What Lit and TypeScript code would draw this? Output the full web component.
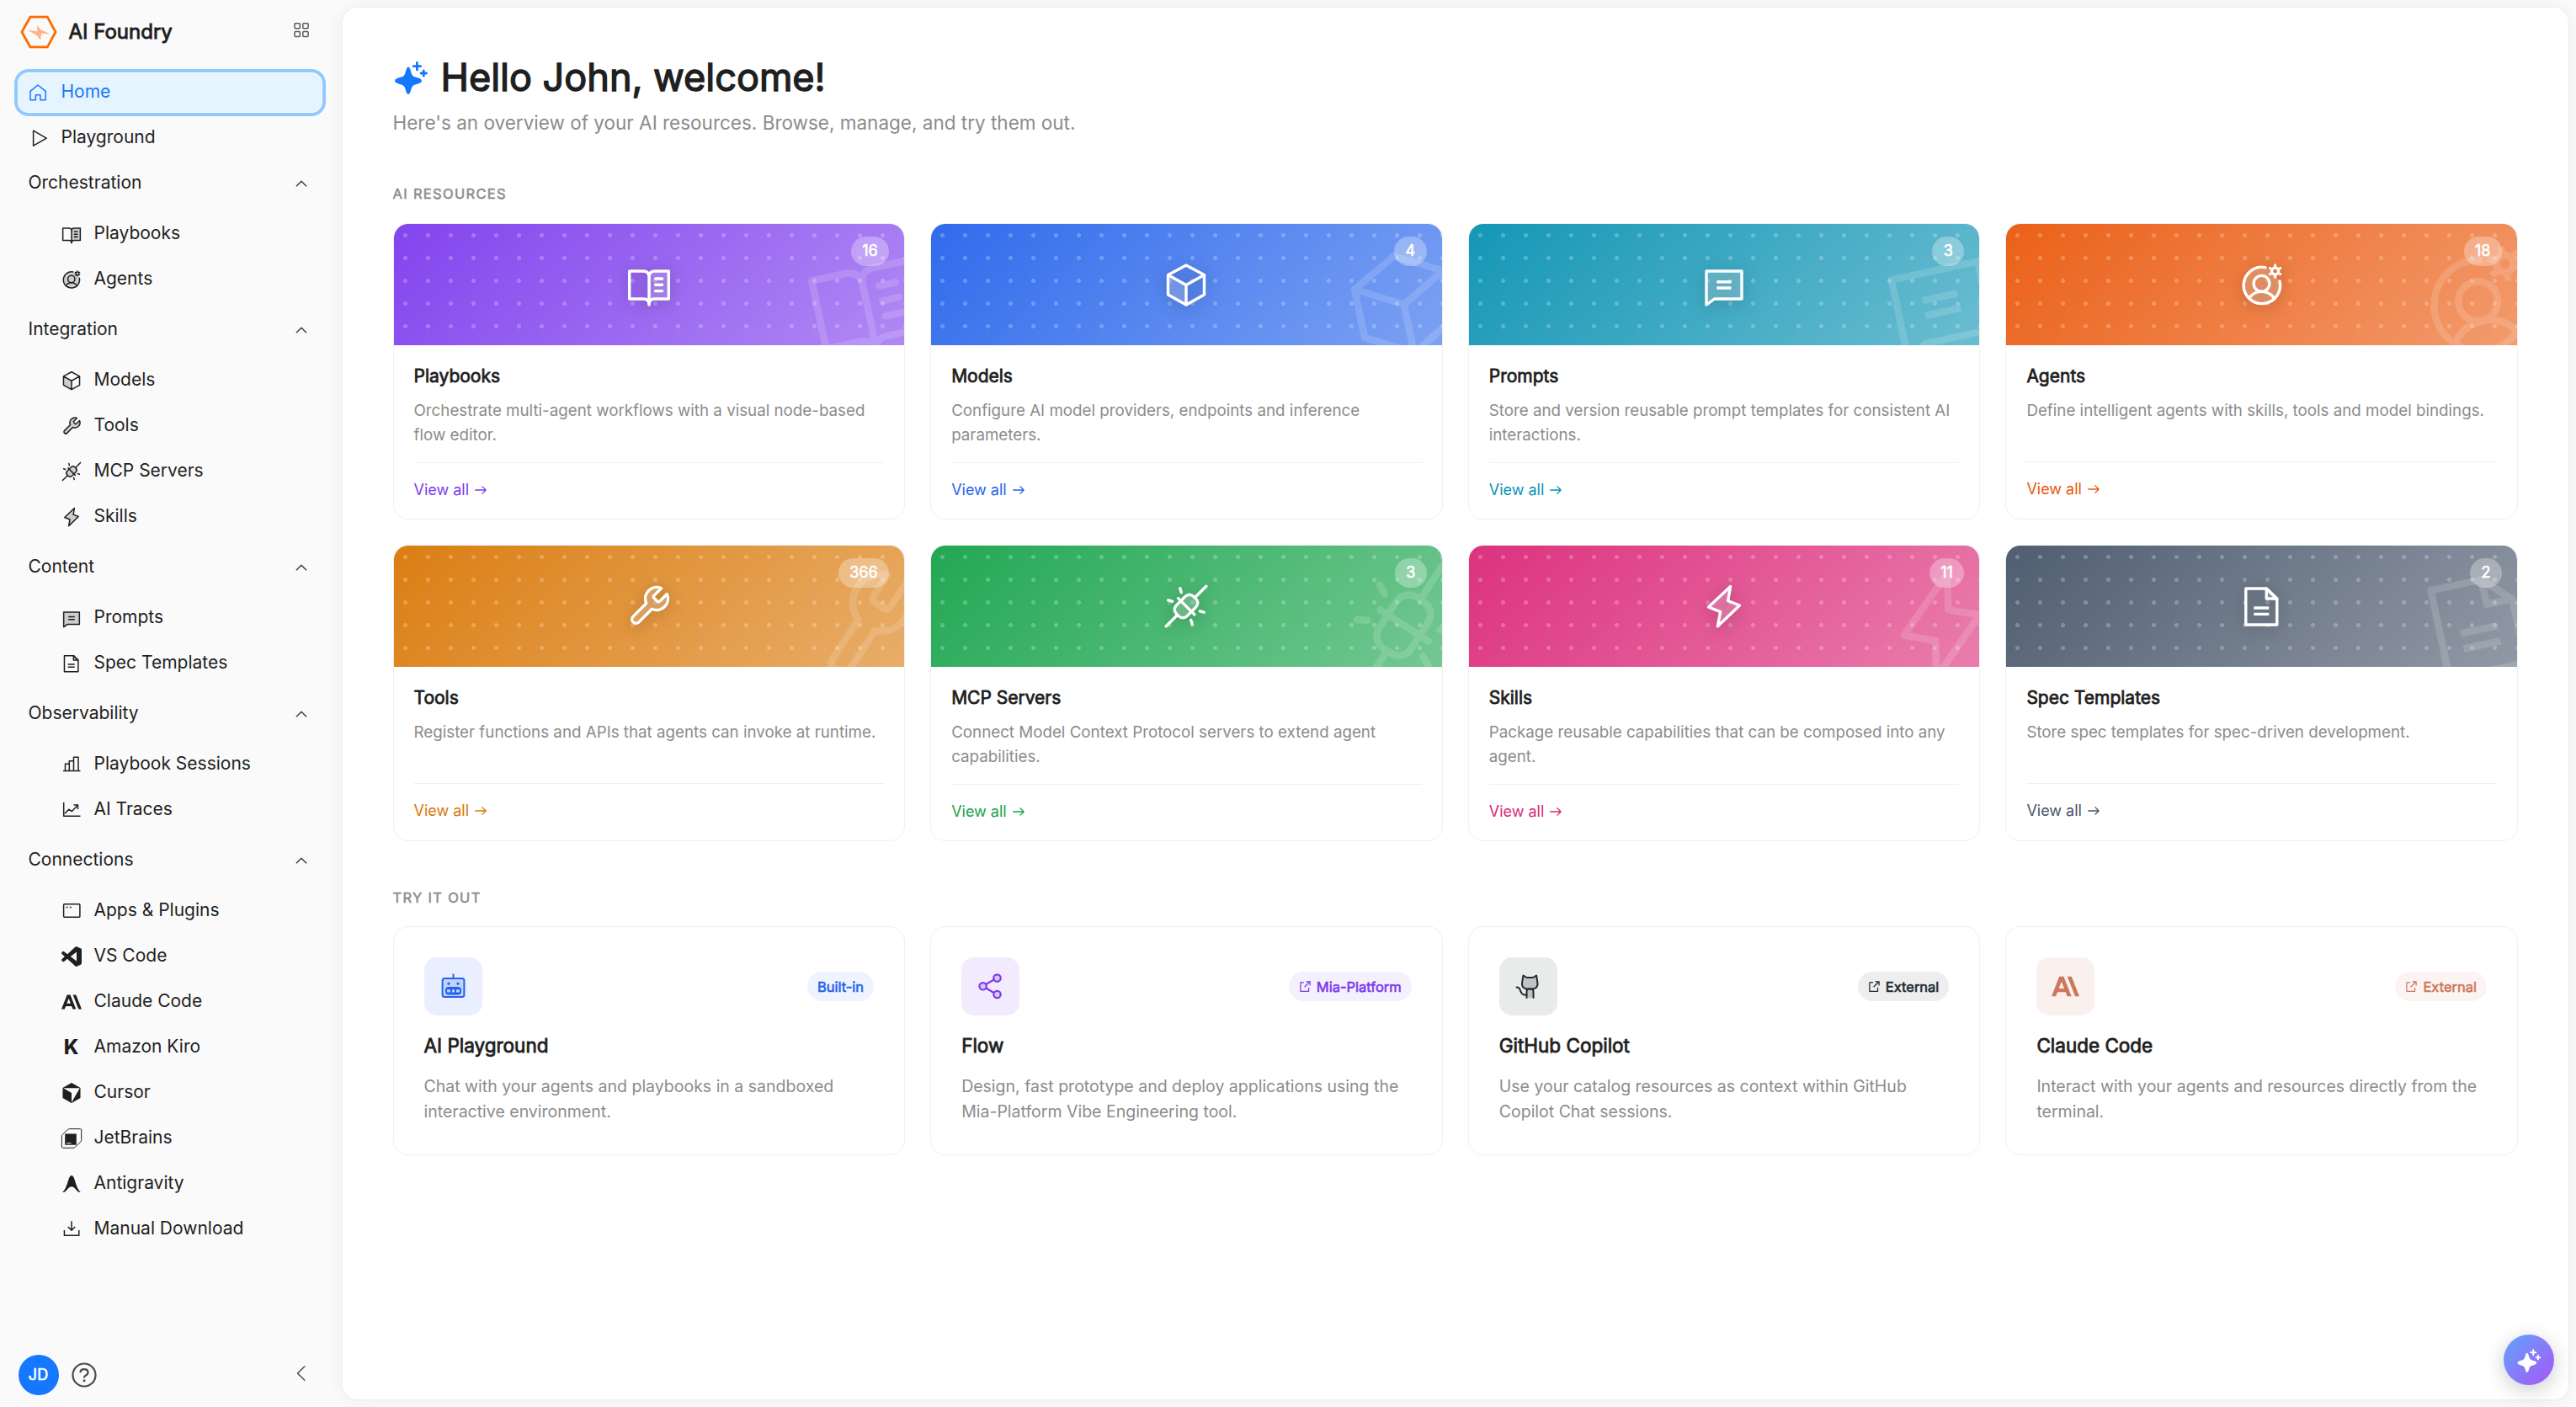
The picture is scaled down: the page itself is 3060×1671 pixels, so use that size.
import { LitElement, html, svg, css, nothing } from "lit";
import type { SVGTemplateResult } from "lit";
import { customElement } from "lit/decorators.js";
import { classMap } from "lit/directives/class-map.js";

interface Glyph {
  box: number;
  art: SVGTemplateResult;
}

/* 54-unit artwork shared by the sidebar and the resource covers. */
const duo = (art: SVGTemplateResult): Glyph => ({
  box: 54,
  art: svg`<g fill="none" stroke="currentColor" stroke-width="3.4" stroke-linejoin="round">${art}</g>`,
});
const line = (art: SVGTemplateResult, w = 1.5): Glyph => ({
  box: 24,
  art: svg`<g fill="none" stroke="currentColor" stroke-width=${w} stroke-linejoin="round">${art}</g>`,
});
const solid = (d: string): Glyph => ({ box: 24, art: svg`<path fill="currentColor" d=${d}></path>` });

const GLYPHS: Record<string, Glyph> = {
  playbooks: duo(svg`
    <path class="tone" stroke="none" d="M27 17Q27 11 34 11H50.3V44H34Q27 44 27 50Z"></path>
    <path d="M27 18Q27 11 20 11H3.7V44H20.5Q27 44 27 51Q27 44 33.500 44H50.3V11H34Q27 11 27 18V50"></path>
    <path stroke-linecap="round" d="M34.600 20H42.600M34.600 27.300H42.600M34.600 34.600H42.600"></path>`),
  agents: duo(svg`
    <circle class="tone" stroke="none" cx="26.500" cy="28" r="21"></circle>
    <path stroke-linecap="round" d="M31 6.600A21.700 21.700 0 1 0 48 23"></path>
    <circle cx="26.500" cy="25.800" r="9.400"></circle>
    <path d="M11.500 43.500Q16.500 35.400 26.500 35.400T41.500 43.500"></path>
    <circle cx="42.600" cy="11" r="4"></circle>
    <path stroke-width="3" d="M42.600 2.600V6M42.600 16V19.400M35.300 6.800L38.300 8.500M46.900 13.500L49.900 15.200M35.300 15.200L38.300 13.500M46.900 8.500L49.900 6.800"></path>`),
  models: duo(svg`
    <path class="tone" stroke="none" d="M5.500 15.600L27 27.500V51L5.500 39Z"></path>
    <path d="M27 4L48.500 15.600V39L27 51L5.500 39V15.600ZM5.500 15.600L27 27.500L48.500 15.600M27 27.500V51"></path>`),
  tools: duo(svg`
    <path class="tone" d="M33.075 14.175a2.250 2.250 0 0 0 0 3.150l3.600 3.600a2.250 2.250 0 0 0 3.150 0l8.480-8.480a13.500 13.500 0 0 1-17.865 17.865L14.890 45.860a4.770 4.770 0 0 1-6.750-6.750l15.550-15.550a13.500 13.500 0 0 1 17.865-17.865l-8.460 8.460z"></path>`),
  mcp: duo(svg`
    <rect class="tone" x="12.500" y="18" width="29" height="18" rx="7" transform="rotate(-45 27 27)"></rect>
    <path stroke-linecap="round" d="M3.200 50.800L16.700 37.300M37.300 16.700L50.800 3.200M17.600 17.600L36.800 36.800M19.800 5.800L21.200 10.600M5.800 19.800L10.600 21.200M43.400 32.800L48.200 34.200M32.800 43.400L34.200 48.200"></path>`),
  skills: duo(svg`
    <path class="tone" d="M34.600 3.500L31.600 20.500L45.500 26L19.400 50.800L22.600 33.600L8.500 28Z"></path>`),
  prompts: duo(svg`
    <path class="tone" d="M6 11H48V44H15.500L6 51Z"></path>
    <path d="M18.300 23.800H35.500M18.300 31H35.500"></path>`),
  specs: duo(svg`<g transform="translate(-.7 0)">
    <path class="tone" d="M33 6V18H45.500Z" ></path>
    <path d="M8.500 6H33L45.500 18.500V49H8.500Z"></path>
    <path d="M18 29H36M18 36.400H36"></path></g>`),
  sessions: line(svg`<path d="M2 19.500H22.500M4.500 19V11.300H9.300V19M9.300 11.300V7.700H14.500V19M14.500 7.700V3.300H20V19"></path>`),
  traces: line(svg`<path d="M2.700 3V19.300H22.500M4 16.300L8.800 11.200L12.400 13.600L19.400 6.200M14.500 6H19.500V11"></path>`),
  apps: line(svg`<rect x="2.600" y="3.700" width="19.300" height="15.600" rx="1"></rect><path d="M5.600 7.600H7.600M9.800 7.600H11.800"></path>`),
  download: line(svg`<path d="M12 2.200V13M7.800 9L12 13.200L16.200 9M3.400 13V19.300H20.800V13"></path>`),
  vscode: solid("M23.150 2.587L18.210.210a1.494 1.494 0 0 0-1.705.290l-9.460 8.630-4.120-3.128a.999.999 0 0 0-1.276.057L.327 7.261A1 1 0 0 0 .326 8.740L3.899 12 .326 15.260a1 1 0 0 0 .001 1.479L1.650 17.940a.999.999 0 0 0 1.276.057l4.120-3.128 9.460 8.630a1.492 1.492 0 0 0 1.704.290l4.942-2.377A1.500 1.500 0 0 0 24 20.060V3.939a1.500 1.500 0 0 0-.850-1.352zm-5.146 14.861L10.826 12l7.178-5.448v10.896z"),
  claude: solid("M17.304 3.541h-3.672l6.696 16.918H24Zm-10.608 0L0 20.459h3.744l1.369-3.553h7.005l1.369 3.553h3.744L10.536 3.541Zm-.371 10.223 2.291-5.946 2.292 5.946Z"),
  cursor: solid("M11.503.131 1.891 5.678a.84.84 0 0 0-.42.726v11.188c0 .3.162.575.42.724l9.609 5.550a1 1 0 0 0 .998 0l9.610-5.550a.84.84 0 0 0 .42-.724V6.404a.84.84 0 0 0-.42-.726L12.497.131a1.010 1.010 0 0 0-.996 0M2.657 6.338h18.550c.263 0 .43.287.297.515L12.230 22.918c-.062.107-.229.064-.229-.060V12.335a.59.59 0 0 0-.295-.51l-9.110-5.257c-.109-.063-.064-.230.061-.230"),
  jetbrains: {
    box: 24,
    art: svg`<path fill="none" stroke="currentColor" stroke-width="1" stroke-linejoin="round" d="M9.500.700H22.500Q23.700.700 23.700 1.900V13.800Q23.700 15 22.900 15.800L16.300 22.400Q15.400 23.300 14.200 23.300H1.600Q.400 23.300.400 22.100V9.500Q.400 8.300 1.200 7.500L7.400 1.600Q8.300.700 9.500.700Z"></path>
      <path fill="currentColor" fill-rule="evenodd" d="M4.200 6.400H17.800V19.800H4.200ZM6 17.200V18.200H11.400V17.200Z"></path>`,
  },
  antigravity: solid("M1.300 21.800C5.500 18 7 11 8.900 5.500Q10.200 1.900 12 1.900T15.100 5.500C17 11 18.500 18 22.700 21.800Q20.500 22.400 17.800 19.400Q14.500 15.200 12 15.200T6.200 19.400Q3.500 22.400 1.300 21.800Z"),
  home: line(svg`<path d="M12 3L21.200 10.300V20.700H14.900V14.800H9.400V20.700H3V10.300Z"></path>`),
  play: line(svg`<path d="M6.600 3.200V21.200L22.200 12.200Z"></path>`),
  grid: line(svg`<rect x="4" y="3.700" width="6.300" height="6" rx="1"></rect><rect x="13.800" y="3.700" width="6.300" height="6" rx="1"></rect><rect x="4" y="13.400" width="6.300" height="6" rx="1"></rect><rect x="13.800" y="13.400" width="6.300" height="6" rx="1"></rect>`),
  up: line(svg`<path d="M5.900 15.200L12 9.200L18.100 15.200"></path>`),
  left: line(svg`<path d="M16.200 3.500L7.500 12L16.200 20.500"></path>`),
  arrow: line(svg`<path d="M3 12H20M14 5.800L20.200 12L14 18.200"></path>`, 1.7),
  external: line(svg`<path d="M9.500 4.500H3V21.200H18.500V14M13.500 2.800H21V10.200M20.500 3.300L10.500 13.300"></path>`, 2),
  help: {
    box: 30,
    art: svg`<g fill="none" stroke="currentColor" stroke-width="2.200"><circle cx="15" cy="15" r="13.500"></circle><path d="M10.500 12.200Q10.500 8.200 15 8.200T19.500 12Q19.500 14.500 16.500 15.700Q15 16.400 15 18.400"></path></g><circle cx="15" cy="21.800" r="1.500" fill="currentColor"></circle>`,
  },
  sparkles: {
    box: 42,
    art: svg`<path fill="currentColor" stroke="currentColor" stroke-width="2" stroke-linejoin="round" d="M18 10.500C19.300 10.500 19.600 13.500 20.800 17.500Q21.800 21 25 22.200C29.500 23.600 33 24 33 26S29.500 28.400 25 29.800Q21.800 31 20.800 34.500C19.600 38.500 19.300 41 18 41S16.400 38.500 15.200 34.500Q14.200 31 11 29.800C6.500 28.400 3 28 3 26S6.500 23.600 11 22.200Q14.200 21 15.200 17.500C16.400 13.500 16.700 10.500 18 10.500Z"></path>
      <path fill="none" stroke="currentColor" stroke-width="2.800" stroke-linecap="round" d="M28.400 4.500V12.900M24.200 8.700H32.600M36.300 13.800V20.200M33.100 17H39.500"></path>`,
  },
  robot: {
    box: 33,
    art: svg`<g fill="none" stroke="currentColor" stroke-width="2"><rect class="tone" x="3.600" y="7" width="25.800" height="22" rx="2.500"></rect><path d="M16.500 1.500V7M9 19.200H24M9 24.500H24M14 19.200V24.500M19 19.200V24.500"></path><rect x="8" y="18" width="17" height="7.500" rx="3"></rect></g><circle cx="11" cy="13.200" r="1.600" fill="currentColor"></circle><circle cx="22" cy="13.200" r="1.600" fill="currentColor"></circle>`,
  },
  share: {
    box: 33,
    art: svg`<g fill="none" stroke="currentColor" stroke-width="2.200"><path d="M10.800 14.200L21 8.300M10.800 18.200L21 24.300"></path><circle class="tone" cx="24.500" cy="6.600" r="4.200"></circle><circle class="tone" cx="7.600" cy="16.300" r="4.200"></circle><circle class="tone" cx="24.500" cy="26" r="4.200"></circle></g>`,
  },
  cat: {
    box: 33,
    art: svg`<g fill="none" stroke="currentColor" stroke-width="2" stroke-linejoin="round" stroke-linecap="round"><path class="tone" d="M10.500 3.500L14.500 6H22L26 3.500L27.200 10.500Q29 19 21 19.500H15.500Q7.500 19 9.300 10.500Z"></path><path class="tone" d="M14.500 30V22.500Q14.500 19.800 17 19.500H19.500Q22.500 19.800 22.500 22.500V30"></path><path d="M2.500 17.500Q6 17.500 6.800 21T11 26.500H14.500"></path></g>`,
  },
};

const icon = (name: string, size: number) => {
  const g = GLYPHS[name];
  return html`<svg class="icon" width=${size} height=${size} viewBox="0 0 ${g.box} ${g.box}" aria-hidden="true">${g.art}</svg>`;
};

interface Entry { icon: string; label: string }
const GROUPS: { title: string; items: Entry[] }[] = [
  { title: "Orchestration", items: [{ icon: "playbooks", label: "Playbooks" }, { icon: "agents", label: "Agents" }] },
  {
    title: "Integration",
    items: [
      { icon: "models", label: "Models" },
      { icon: "tools", label: "Tools" },
      { icon: "mcp", label: "MCP Servers" },
      { icon: "skills", label: "Skills" },
    ],
  },
  { title: "Content", items: [{ icon: "prompts", label: "Prompts" }, { icon: "specs", label: "Spec Templates" }] },
  { title: "Observability", items: [{ icon: "sessions", label: "Playbook Sessions" }, { icon: "traces", label: "AI Traces" }] },
  {
    title: "Connections",
    items: [
      { icon: "apps", label: "Apps & Plugins" },
      { icon: "vscode", label: "VS Code" },
      { icon: "claude", label: "Claude Code" },
      { icon: "kiro", label: "Amazon Kiro" },
      { icon: "cursor", label: "Cursor" },
      { icon: "jetbrains", label: "JetBrains" },
      { icon: "antigravity", label: "Antigravity" },
      { icon: "download", label: "Manual Download" },
    ],
  },
];

const RESOURCES = [
  { icon: "playbooks", hue: "violet", title: "Playbooks", count: 16, text: "Orchestrate multi-agent workflows with a visual node-based flow editor." },
  { icon: "models", hue: "blue", title: "Models", count: 4, text: "Configure AI model providers, endpoints and inference parameters." },
  { icon: "prompts", hue: "cyan", title: "Prompts", count: 3, text: "Store and version reusable prompt templates for consistent AI interactions." },
  { icon: "agents", hue: "orange", title: "Agents", count: 18, text: "Define intelligent agents with skills, tools and model bindings." },
  { icon: "tools", hue: "amber", title: "Tools", count: 366, text: "Register functions and APIs that agents can invoke at runtime." },
  { icon: "mcp", hue: "green", title: "MCP Servers", count: 3, text: "Connect Model Context Protocol servers to extend agent capabilities." },
  { icon: "skills", hue: "pink", title: "Skills", count: 11, text: "Package reusable capabilities that can be composed into any agent." },
  { icon: "specs", hue: "slate", title: "Spec Templates", count: 2, text: "Store spec templates for spec-driven development." },
];

const TRIALS = [
  { icon: "robot", look: "t-blue", tag: "Built-in", ext: false, title: "AI Playground", text: "Chat with your agents and playbooks in a sandboxed interactive environment." },
  { icon: "share", look: "t-violet", tag: "Mia-Platform", ext: true, title: "Flow", text: "Design, fast prototype and deploy applications using the Mia-Platform Vibe Engineering tool." },
  { icon: "cat", look: "t-dark", tag: "External", ext: true, title: "GitHub Copilot", text: "Use your catalog resources as context within GitHub Copilot Chat sessions." },
  { icon: "claude", look: "t-clay", tag: "External", ext: true, title: "Claude Code", text: "Interact with your agents and resources directly from the terminal." },
];

@customElement("app-root")
export class AppRoot extends LitElement {
  static styles = css`
    :host {
      display: block;
      height: 100vh;
      font-family: Inter, "Liberation Sans", sans-serif;
      color: #1f1f1f;
      --faint: #8c8c8c;
    }
    * { box-sizing: border-box; }
    h1, h2, h3, p { margin: 0; font-weight: 400; }
    .icon { display: block; flex: none; overflow: visible; }
    .tone { fill: currentColor; fill-opacity: 0.2; }
    .strong { -webkit-text-stroke: 0.037em currentColor; }

    .shell {
      display: grid;
      grid-template-columns: 406.5px minmax(0, 1fr);
      height: 100%;
      background: #fafafa;
      overflow: hidden;
    }

    /* Sidebar */
    .side { display: flex; flex-direction: column; min-height: 0; }
    .brand {
      display: flex;
      align-items: center;
      height: 76px;
      margin-bottom: 6px;
      padding: 0 37px 0 23.5px;
    }
    .logo { display: block; }
    .name { flex: 1; margin-left: 14px; font-size: 24px; line-height: 38px; }
    .brand .icon { color: #595959; margin: -4px 0 0; }
    .row {
      display: flex;
      align-items: center;
      height: 54px;
      font-size: 21px;
      line-height: 32px;
      padding-left: 33px;
    }
    .row .label { margin-left: 15.500px; }
    .row .icon { margin-top: 2px; }
    .row.active {
      height: 46px;
      margin: 5px 25px 3px 21.500px;
      padding: 0 0 2px 11.500px;
      border-radius: 12px;
      background: #e6f4ff;
      color: #1677ff;
      outline: 4px solid #91caff;
      outline-offset: 1.500px;
    }
    .row.head { padding: 0 37px 0 33.500px; }
    .row.head .label { flex: 1; margin-left: 0; }
    .row.head .icon { margin-top: 1px; color: #3d3d3d; }
    .kids { padding: 6px 0; }
    .kids .row { padding-left: 72.500px; }
    .kids .label { margin-left: 15px; }
    .kiro { width: 24px; margin-top: 2px; text-align: center; font-size: 24px; font-weight: 800; line-height: 24px; }
    .foot {
      display: flex;
      align-items: center;
      height: 48px;
      margin-top: auto;
      margin-bottom: 14px;
      padding: 0 37px 0 21.500px;
      color: #4a4a4a;
    }
    .foot > .icon:last-child { margin-top: -4px; }
    .avatar {
      display: grid;
      place-items: center;
      width: 48px;
      height: 48px;
      border-radius: 50%;
      background: #1677ff;
      color: #fff;
      font-size: 18px;
      line-height: 24px;
      margin-right: 15px;
    }
    .spring { flex: 1; }

    /* Content panel */
    .panel {
      margin: 9px 9px 9px 0;
      padding: 56px 60px 0;
      border-radius: 18px;
      background: #fff;
      box-shadow: 0 0 4px rgba(0, 0, 0, 0.05), 0 0 24px rgba(0, 0, 0, 0.05);
      min-width: 0;
    }
    .hello { display: flex; align-items: center; height: 54px; }
    .hello .icon { color: #1677ff; margin-top: -2px; }
    .hello h1 { margin-left: 15px; font-size: 45px; line-height: 54px; -webkit-text-stroke: 0.031em currentColor; white-space: nowrap; }
    .lead { margin: 10px 0 0; font-size: 22.500px; line-height: 33px; color: var(--faint); }
    .caption { font-size: 16.500px; line-height: 27px; letter-spacing: 0.08em; color: var(--faint); -webkit-text-stroke: 0.032em currentColor; }
    .first { margin: 55px 0 21px; }
    .second { margin: 53.500px 0 20.500px; }
    .cards { display: grid; grid-template-columns: repeat(4, minmax(0, 1fr)); gap: 30px; }
    .card { border: 1px solid #f0f0f0; border-radius: 18px; background: #fff; overflow: hidden; min-width: 0; }
    .resource { height: 352px; }

    .violet { --tint: 124, 58, 237; }
    .blue { --tint: 37, 99, 235; }
    .cyan { --tint: 8, 145, 178; }
    .orange { --tint: 234, 88, 12; }
    .amber { --tint: 217, 119, 6; }
    .green { --tint: 22, 163, 74; }
    .pink { --tint: 219, 39, 119; }
    .slate { --tint: 71, 85, 105; }
    .cover {
      position: relative;
      display: grid;
      place-items: center;
      height: 144px;
      overflow: hidden;
      color: #fff;
      background:
        radial-gradient(circle, rgba(255, 255, 255, 0.23) 2.250px, transparent 2.800px) 0 0 / 27px 27px,
        linear-gradient(135deg, rgba(var(--tint), 0.95), rgba(var(--tint), 0.6));
    }
    .mark { filter: drop-shadow(0 3px 9px rgba(0, 0, 0, 0.25)); }
    .ghost { position: absolute; right: -22.500px; bottom: -18px; opacity: 0.15; transform: rotate(-12deg); }
    .ghost .tone { fill-opacity: 0; }
    .count {
      position: absolute;
      top: 15px;
      right: 18px;
      height: 35px;
      padding: 0 13.500px;
      border-radius: 18px;
      background: rgba(255, 255, 255, 0.3);
      font-size: 18px;
      line-height: 33px;
    }
    .body { padding: 24px 24px 0; }
    .body h3 { font-size: 21px; line-height: 25px; }
    .body p { min-height: 57px; margin: 13.700px 0 18px; font-size: 18.750px; line-height: 29.060px; color: var(--faint); }
    .more {
      display: flex;
      align-items: center;
      gap: 5px;
      padding-top: 18px;
      border-top: 1px solid #f0f0f0;
      font-size: 18px;
      line-height: 28.300px;
      color: rgb(var(--tint));
    }

    .trial { padding: 36px; height: 272px; }
    .top { display: flex; align-items: center; justify-content: space-between; }
    .tile { display: grid; place-items: center; width: 69px; height: 69px; border-radius: 15px; background: var(--soft); color: var(--ink); }
    .tag {
      display: flex;
      align-items: center;
      gap: 6px;
      height: 35px;
      padding: 0 12px;
      border-radius: 18px;
      background: var(--wash);
      color: var(--ink);
      font-size: 16.500px;
      line-height: 24px;
    }
    .trial h3 { margin-top: 21.500px; font-size: 22.500px; line-height: 27px; }
    .trial p { margin-top: 20.500px; font-size: 19.500px; line-height: 30.200px; color: var(--faint); }
    .t-blue { --ink: #2563eb; --soft: #e9efff; --wash: #eef3fe; }
    .t-violet { --ink: #7c3aed; --soft: #f2ebfd; --wash: #f5f0fe; }
    .t-dark { --ink: #24292f; --soft: #e9ebeb; --wash: #eeeeef; }
    .t-clay { --ink: #cc785c; --soft: #faf1ef; --wash: #fcf4f2; }

    .fab {
      position: absolute;
      right: 26.500px;
      bottom: 26px;
      display: grid;
      place-items: center;
      width: 60px;
      height: 60px;
      border-radius: 50%;
      color: #fff;
      background: linear-gradient(135deg, #60a5fa, #a855f7);
      box-shadow: 0 6px 24px rgba(0, 0, 0, 0.2);
    }
  `;

  private row(e: Entry, active = false) {
    return html`<div class=${classMap({ row: true, active })}>
      ${e.icon === "kiro" ? html`<span class="kiro">K</span>` : icon(e.icon, 24)}
      <span class="label">${e.label}</span>
    </div>`;
  }

  render() {
    return html`<div class="shell">
      <nav class="side">
        <div class="brand">
          <svg class="logo" width="44" height="40" viewBox="0 0 44 40" aria-hidden="true">
            <path fill="none" stroke="#ff6a00" stroke-width="2.800" d="M11.900 2.200H32.300L42 20L32.300 37.800H11.900L1.900 20Z"></path>
            <path fill="#ffb38a" d="M20 12L24.500 17.300L35.500 22.500L25.300 21.400L24 29.500L19.500 24L8.600 17.400L20.300 19.200Z"></path>
          </svg>
          <span class="name strong">AI Foundry</span>
          ${icon("grid", 24)}
        </div>
        ${this.row({ icon: "home", label: "Home" }, true)}
        ${this.row({ icon: "play", label: "Playground" })}
        ${GROUPS.map(
          (g) => html`<div class="row head"><span class="label">${g.title}</span>${icon("up", 24)}</div>
            <div class="kids">${g.items.map((i) => this.row(i))}</div>`,
        )}
        <div class="foot">
          <span class="avatar strong">JD</span>
          ${icon("help", 30)}
          <span class="spring"></span>
          ${icon("left", 24)}
        </div>
      </nav>
      <main class="panel">
        <header class="hello">${icon("sparkles", 42)}<h1>Hello John, welcome!</h1></header>
        <p class="lead">Here's an overview of your AI resources. Browse, manage, and try them out.</p>
        <h2 class="caption first">AI RESOURCES</h2>
        <section class="cards">
          ${RESOURCES.map(
            (r) => html`<article class="card resource ${r.hue}">
              <div class="cover">
                <div class="ghost">${icon(r.icon, 135)}</div>
                <div class="mark">${icon(r.icon, 54)}</div>
                <span class="count strong">${r.count}</span>
              </div>
              <div class="body">
                <h3 class="strong">${r.title}</h3>
                <p>${r.text}</p>
                <div class="more"><span>View all</span>${icon("arrow", 18)}</div>
              </div>
            </article>`,
          )}
        </section>
        <h2 class="caption second">TRY IT OUT</h2>
        <section class="cards">
          ${TRIALS.map(
            (t) => html`<article class="card trial ${t.look}">
              <div class="top">
                <span class="tile">${icon(t.icon, 33)}</span>
                <span class="tag">${t.ext ? icon("external", 15) : nothing}<span class="strong">${t.tag}</span></span>
              </div>
              <h3 class="strong">${t.title}</h3>
              <p>${t.text}</p>
            </article>`,
          )}
        </section>
      </main>
      <div class="fab">${icon("sparkles", 30)}</div>
    </div>`;
  }
}
